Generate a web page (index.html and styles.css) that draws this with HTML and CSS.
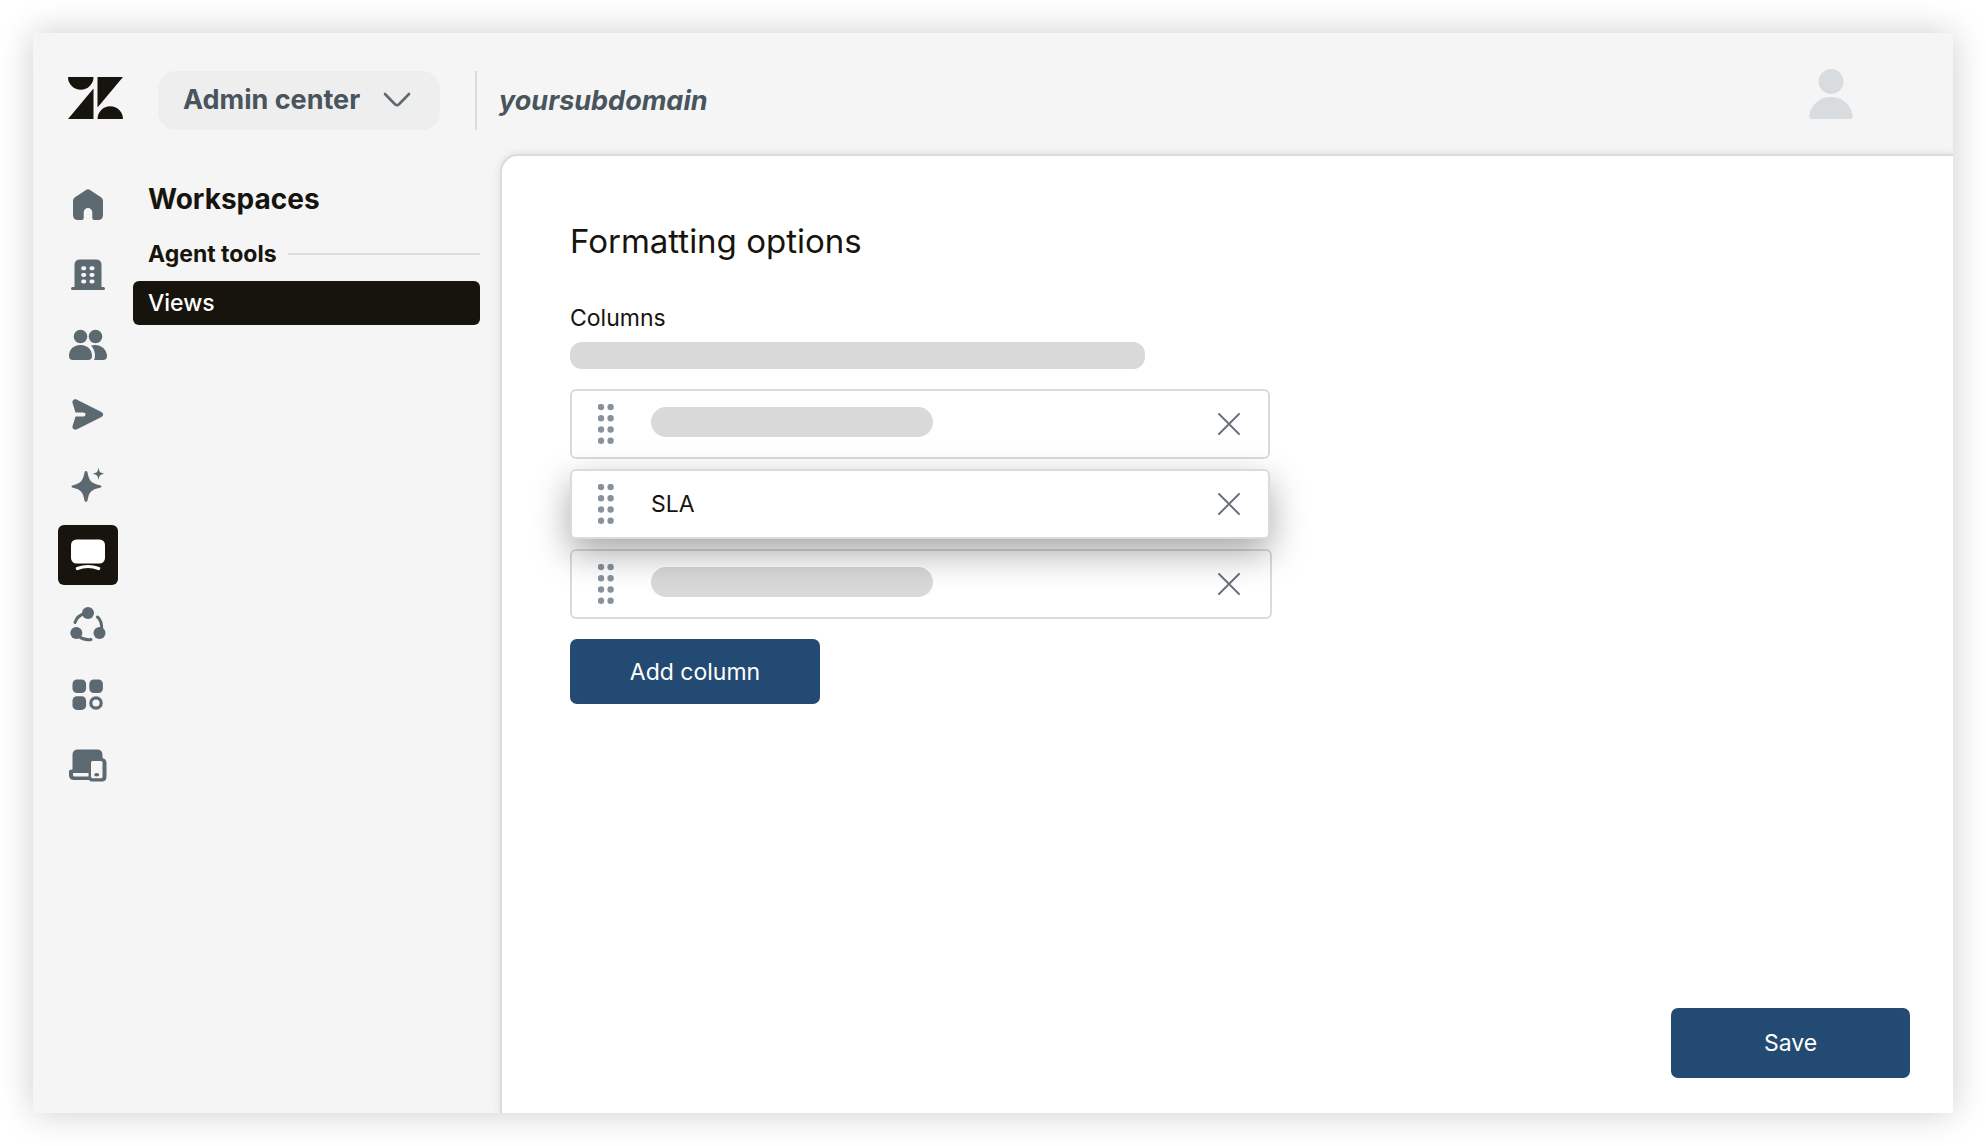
FILE: index.html
```html
<!DOCTYPE html>
<html lang="en">
<head>
    <meta charset="UTF-8">
    <meta name="viewport" content="width=device-width, initial-scale=1.0">
    <title>Admin center</title>
    <link rel="stylesheet" href="styles.css">
</head>
<body>
    <svg class="defs" width="0" height="0" aria-hidden="true">
        <symbol id="grip" viewBox="0 0 16 40">
            <circle cx="3" cy="3" r="3.2"/><circle cx="12.6" cy="3" r="3.2"/>
            <circle cx="3" cy="14.3" r="3.2"/><circle cx="12.6" cy="14.3" r="3.2"/>
            <circle cx="3" cy="25.5" r="3.2"/><circle cx="12.6" cy="25.5" r="3.2"/>
            <circle cx="3" cy="36.8" r="3.2"/><circle cx="12.6" cy="36.8" r="3.2"/>
        </symbol>
        <symbol id="close" viewBox="0 0 22 22">
            <path d="M1 1L21 21M21 1L1 21" fill="none" stroke="currentColor" stroke-width="2" stroke-linecap="round"/>
        </symbol>
    </svg>
    <div class="app">
        <header class="topbar">
            <svg class="logo" viewBox="0 0 55 42">
                <path d="M0 0H25.5A12.75 12.75 0 0 1 0 0ZM25.5 11.500V42H0ZM29.500 0H55L29.500 30.500ZM29.500 42A12.75 12.75 0 0 1 55 42Z"/>
            </svg>
            <button class="product" type="button">
                Admin center
                <svg width="28" height="16" viewBox="0 0 28 16"><path d="M2 2L12 12.200Q14 14 16 12.200L26 2" fill="none" stroke="#5c6970" stroke-width="2.600" stroke-linecap="round"/></svg>
            </button>
            <span class="subdomain">yoursubdomain</span>
            <button class="avatar" type="button" aria-label="Profile">
                <svg width="44" height="50" viewBox="0 0 44 50"><circle cx="22" cy="12.500" r="12.500"/><path d="M3 50C1 50 0 48.500 .3 46.500C2 35.500 11 28 22 28S42 35.500 43.700 46.500C44 48.500 43 50 41 50Z"/></svg>
            </button>
        </header>

        <div class="body">
            <nav class="rail" aria-label="Sections">
                <a href="#" aria-label="Home">
                    <svg viewBox="0 0 40 40"><path d="M18 5Q20 3.600 22 5L33 12.200Q35 13.500 35 16V30Q35 35 30 35H26Q24.300 35 24.300 33V27.300A4.300 4.300 0 0 0 15.700 27.300V33Q15.700 35 14 35H10Q5 35 5 30V16Q5 13.500 7 12.200Z"/></svg>
                </a>
                <a href="#" aria-label="Account">
                    <svg viewBox="0 0 40 40"><path d="M6.500 32V10Q6.500 4.500 12 4.500H28Q33.500 4.500 33.500 10V32H35.500A1.500 1.500 0 0 1 35.500 35H4.500A1.500 1.500 0 0 1 4.500 32Z"/><g class="cutout"><rect x="13.200" y="11.200" width="5" height="4" rx="1.800"/><rect x="21.500" y="11.200" width="5" height="4" rx="1.800"/><rect x="13.200" y="17.900" width="5" height="4" rx="1.800"/><rect x="21.500" y="17.900" width="5" height="4" rx="1.800"/><rect x="13.200" y="24.500" width="5" height="4" rx="1.800"/><rect x="21.500" y="24.500" width="5" height="4" rx="1.800"/></g></svg>
                </a>
                <a href="#" aria-label="People">
                    <svg viewBox="0 0 40 40"><circle cx="12.500" cy="11.500" r="6.800"/><circle cx="27.500" cy="11.500" r="6.800"/><path d="M5 35Q1 35 1 31C1 25 5 20 12.500 20S24 25 24 31Q24 35 20 35ZM23 20.500C33 18 39 25 39 31Q39 35 35 35H26C28 31 27 25 23 20.500Z"/></svg>
                </a>
                <a href="#" aria-label="Channels">
                    <svg viewBox="0 0 40 40"><path d="M9 4.700L33.500 17Q37 19.500 33.500 22L9 34.300C6.500 35.500 3.500 33.500 4.700 30.500L7.500 21.500H15.500A1.800 1.800 0 0 0 15.500 17.500H7.500L4.700 8.500C3.500 5.500 6.500 3.500 9 4.700Z"/></svg>
                </a>
                <a href="#" aria-label="AI">
                    <svg viewBox="0 0 40 40"><path d="M16.500 7.500C17 5.500 19 5.500 19.500 7.500C21 15.500 23 18.500 32 20.200C34 20.700 34 22.300 32 22.800C23 24.500 21 27.500 19.500 35.500C19 37.200 17 37.200 16.500 35.500C15 27.500 13 24.500 5 22.800C3 22.300 3 20.700 5 20.200C13 18.500 15 15.500 16.500 7.500ZM30.500 2.500C31.300 7 32 7.800 36.500 8.700C32 9.600 31.300 10.400 30.500 15C29.700 10.400 29 9.600 24.500 8.700C29 7.800 29.700 7 30.500 2.500Z"/></svg>
                </a>
                <a href="#" class="current" aria-label="Workspaces" aria-current="page">
                    <svg viewBox="0 0 40 40"><rect x="3" y="4.500" width="34" height="24" rx="5.500"/><path d="M9.300 33.500Q20 29.500 30.700 33.500" fill="none" stroke="#fff" stroke-width="3.200" stroke-linecap="round"/></svg>
                </a>
                <a href="#" aria-label="Objects and rules">
                    <svg viewBox="0 0 40 40"><circle cx="20" cy="8" r="6"/><circle cx="8.300" cy="28" r="6"/><circle cx="31.500" cy="28" r="6"/><path d="M17 8.500Q9 10.500 7 17.500M29.500 12Q34.500 16 33.500 26M10 31Q16 35.500 23 34.500" fill="none" stroke="#5c6970" stroke-width="3" stroke-linecap="round"/></svg>
                </a>
                <a href="#" aria-label="Apps and integrations">
                    <svg viewBox="0 0 40 40"><rect x="4.500" y="4.500" width="13.600" height="13.600" rx="4.500"/><rect x="21.300" y="4.500" width="13.600" height="13.600" rx="4.500"/><rect x="4.500" y="21.300" width="13.600" height="13.600" rx="4.500"/><circle cx="28" cy="28" r="5.200" fill="none" stroke="#5c6970" stroke-width="3.200"/></svg>
                </a>
                <a href="#" aria-label="Devices">
                    <svg viewBox="0 0 40 40"><path d="M4.500 24.500V10Q4.500 4.500 10 4.500H29Q34.500 4.500 34.500 10V13Q38.500 14 38.500 18V31.500Q38.500 36.500 34 36.500H24Q22 36.500 21 35H6Q1 35 1 30V26.500Q1 24.800 2.500 24.800Z"/><g class="cutout"><path d="M5 28H20.500V31.500H6.500Q5 31.500 5 30Z"/><rect x="23" y="16" width="11.500" height="17.300" rx="1.500"/></g><ellipse cx="28.700" cy="29.700" rx="2.500" ry="1.800"/></svg>
                </a>
            </nav>

            <aside class="sidebar">
                <h1>Workspaces</h1>
                <h2>Agent tools</h2>
                <a class="view-link" href="#" aria-current="page">Views</a>
            </aside>

            <main class="panel">
                <h2 class="title">Formatting options</h2>
                <h3 id="columns-label">Columns</h3>
                <div class="placeholder hint"></div>
                <ul class="columns" aria-labelledby="columns-label">
                    <li class="column">
                        <svg class="grip"><use href="#grip"/></svg>
                        <span class="name"><span class="placeholder"></span></span>
                        <button type="button" aria-label="Remove"><svg width="22" height="22"><use href="#close"/></svg></button>
                    </li>
                    <li class="column dragging">
                        <svg class="grip"><use href="#grip"/></svg>
                        <span class="name">SLA</span>
                        <button type="button" aria-label="Remove SLA"><svg width="22" height="22"><use href="#close"/></svg></button>
                    </li>
                    <li class="column">
                        <svg class="grip"><use href="#grip"/></svg>
                        <span class="name"><span class="placeholder"></span></span>
                        <button type="button" aria-label="Remove"><svg width="22" height="22"><use href="#close"/></svg></button>
                    </li>
                </ul>
                <button class="btn add" type="button">Add column</button>
                <button class="btn save" type="button">Save</button>
            </main>
        </div>
    </div>
</body>
</html>
```
FILE: styles.css
```css
* {
    box-sizing: border-box;
}
body {
    margin: 0;
    padding: 33px;
    background-color: #fff;
    color: #17140d;
    font-family: Inter, "Liberation Sans", sans-serif;
    font-size: 23px;
    line-height: 28px;
}
h1, h2, h3, ul {
    margin: 0;
    padding: 0;
}
button {
    border: none;
    background: none;
    padding: 0;
    font: inherit;
    cursor: pointer;
}
svg {
    display: block;
    flex: none;
}
.defs {
    position: absolute;
}
.app {
    display: flex;
    flex-direction: column;
    min-height: calc(100vh - 66px);
    background-color: #f5f5f5;
    box-shadow: 0 0 33px rgba(0, 0, 0, 0.2);
}

/* Top bar */
.topbar {
    display: flex;
    align-items: center;
    height: 121px;
    padding: 13px 100px 0 35px;
}
.logo {
    width: 55px;
    height: 42px;
    margin: 0 35px 4px 0;
    fill: #17140d;
}
.product {
    display: flex;
    align-items: center;
    justify-content: space-between;
    width: 282px;
    height: 59px;
    padding: 0 29px 0 25px;
    border-radius: 18px;
    background-color: #eee;
    color: #49545c;
    font-size: 27px;
    font-weight: 700;
}
.subdomain {
    margin-left: 35px;
    padding-left: 22px;
    border-left: 2px solid #d8dcde;
    color: #49545c;
    font-size: 27px;
    font-style: italic;
    font-weight: 700;
    line-height: 59px;
}
.avatar {
    margin: 0 0 13px auto;
    fill: #d8dcde;
}

/* Columns under the top bar */
.body {
    display: flex;
    flex: 1;
}
.rail {
    display: flex;
    flex-direction: column;
    gap: 10px;
    padding: 21px 15px 0 25px;
}
.rail a {
    display: flex;
    align-items: center;
    justify-content: center;
    width: 60px;
    height: 60px;
    border-radius: 6px;
}
.rail svg {
    width: 40px;
    height: 40px;
    fill: #5c6970;
}
.rail .cutout {
    fill: #f5f5f5;
}
.rail .current {
    background-color: #17140d;
}
.rail .current svg {
    fill: #fff;
}
.sidebar {
    width: 367px;
    padding: 28px 20px 0 0;
}
.sidebar h1 {
    padding-left: 15px;
    font-size: 28px;
    font-weight: 700;
    line-height: 34px;
}
.sidebar h2 {
    display: flex;
    align-items: center;
    gap: 11px;
    margin: 24px 0 13px;
    padding-left: 15px;
    font-size: 23px;
    font-weight: 700;
}
.sidebar h2::after {
    content: "";
    flex: 1;
    height: 2px;
    background-color: #d8dfe0;
}
.view-link {
    display: block;
    padding: 8px 15px;
    border-radius: 6px;
    background-color: #17140d;
    color: #fff;
    font-weight: 500;
    text-decoration: none;
}

/* Main panel */
.panel {
    display: flex;
    flex: 1;
    flex-direction: column;
    align-items: flex-start;
    padding: 65px 43px 35px 68px;
    border-top: 2px solid #d8dcde;
    border-left: 2px solid #d8dcde;
    border-top-left-radius: 18px;
    background-color: #fff;
    box-shadow: 0 0 8px rgba(0, 0, 0, 0.1);
    clip-path: inset(-8px 0 0 -8px);
}
.title {
    font-size: 33px;
    font-weight: 400;
    line-height: 40px;
}
.panel h3 {
    margin-top: 43px;
    font-size: 23px;
    font-weight: 400;
}
.placeholder {
    display: block;
    width: 282px;
    height: 30px;
    border-radius: 15px;
    background-color: #d9d9d9;
}
.hint {
    width: 100%;
    max-width: 575px;
    height: 27px;
    margin-top: 10px;
    border-radius: 12px;
}
.columns {
    display: flex;
    flex-direction: column;
    gap: 10px;
    width: 100%;
    max-width: 700px;
    margin: 20px 0;
    list-style: none;
}
.column {
    display: flex;
    align-items: center;
    height: 70px;
    padding: 0 28px 0 26px;
    border: 2px solid #d8dcde;
    border-radius: 6px;
    background-color: #fff;
}
.column:last-child {
    margin-right: -2px;
    padding-right: 30px;
}
.dragging {
    position: relative;
    z-index: 1;
    box-shadow: 0 14px 36px rgba(0, 0, 0, 0.35);
}
.grip {
    width: 16px;
    height: 40px;
    margin-right: 37px;
    fill: #87929d;
    overflow: visible;
}
.name {
    flex: 1;
}
.name .placeholder {
    margin-bottom: 5px;
}
.column button {
    color: #68737d;
}
.btn {
    height: 65px;
    border-radius: 7px;
    background-color: #234a72;
    color: #fff;
}
.add {
    width: 250px;
}
.save {
    width: 239px;
    height: 70px;
    margin-top: auto;
    align-self: flex-end;
}
```
